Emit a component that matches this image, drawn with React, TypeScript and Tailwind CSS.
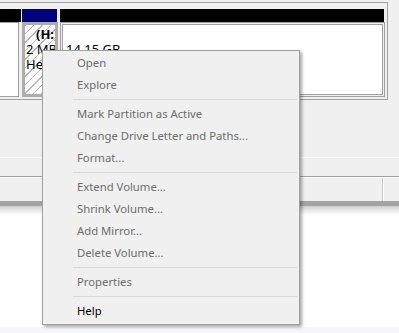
import React from 'react';

type Item = { label: string; enabled?: boolean } | 'sep';

const menuItems: Item[] = [
  { label: 'Open' },
  { label: 'Explore' },
  'sep',
  { label: 'Mark Partition as Active' },
  { label: 'Change Drive Letter and Paths...' },
  { label: 'Format...' },
  'sep',
  { label: 'Extend Volume...' },
  { label: 'Shrink Volume...' },
  { label: 'Add Mirror...' },
  { label: 'Delete Volume...' },
  'sep',
  { label: 'Properties' },
  'sep',
  { label: 'Help', enabled: true },
];

const ContextMenu = () => {
  return (
    <div className="absolute left-[42px] top-[50px] w-[258px] border border-[#a0a0a0] bg-[#f0f0f0] pt-px pb-[2px] shadow-[2px_2px_3px_rgba(0,0,0,0.35)]">
      {menuItems.map((item, i) =>
        item === 'sep' ? (
          <div key={i} className="h-[7px] pt-[3px] pl-[30px] pr-[2px]">
            <div className="h-px bg-[#d7d7d7]" />
          </div>
        ) : (
          <div
            key={i}
            className={`flex h-[22px] items-center pb-px pl-[34px] text-[11.3px] ${
              item.enabled ? 'text-black' : 'text-[#6d6d6d]'
            }`}
          >
            {item.label}
          </div>
        )
      )}
    </div>
  );
};

const App = () => {
  return (
    <div className="relative h-[333px] w-[399px] overflow-hidden bg-white font-['Noto_Sans','Liberation_Sans',sans-serif] text-[13px] leading-[15px] text-black">
      {/* window */}
      <div className="bg-[#f0f0f0]">
        <div className="h-[2px]" />
        {/* disk frame */}
        <div className="mr-[11px] border-y border-r border-[#a0a0a0] pt-[6px] pb-[2px] pr-[2px]">
          <div className="flex">
            {/* left partition */}
            <div className="w-[21px] mr-px">
              <div className="h-[13px] bg-black" />
              <div className="h-[75px] pr-[2px]">
                <div className="h-full border-y border-r border-[#a0a0a0] bg-white" />
              </div>
            </div>
            {/* selected partition H: */}
            <div className="w-[36px] mr-px">
              <div className="h-[13px] bg-[#000080] mr-px" />
              <div className="h-[75px] border-[3px] border-[#acacac] bg-[repeating-linear-gradient(135deg,#b8b8b8_0px,#b8b8b8_1px,#ffffff_1px,#ffffff_6px)] overflow-hidden whitespace-nowrap pt-[2px] pl-px">
                <div className="pl-[10px] font-bold">(H:)</div>
                <div>2 MB</div>
                <div>Healthy (Primary Partition)</div>
              </div>
            </div>
            {/* unallocated */}
            <div className="flex-1 ml-px">
              <div className="h-[13px] bg-black mr-px" />
              <div className="h-[75px] border border-[#a0a0a0] p-px">
                <div className="h-full border border-[#a0a0a0] bg-white pt-[2px] pl-[3px] whitespace-nowrap">
                  <div>&nbsp;</div>
                  <div>14.15 GB</div>
                </div>
              </div>
            </div>
          </div>
        </div>
        <div className="h-[57px]" />
        <div className="h-px bg-white" />
        <div className="h-[18px]" />
        <div className="h-px bg-[#a0a0a0]" />
        <div className="h-px bg-white" />
        {/* status bar */}
        <div className="flex h-[23px]">
          <div className="w-[382px]" />
          <div className="w-px bg-[#c8c8c8]" />
          <div className="w-px bg-white" />
        </div>
      </div>
      <div className="h-[5px] bg-[#a3a3a3]" />
      <div className="h-[9px] bg-[linear-gradient(to_bottom,#cfcfcf,#ffffff)]" />
      <div className="h-[112px]" />
      <div className="h-[6px] bg-[#f4f6f9]" />

      <ContextMenu />
    </div>
  );
};

export default App;
